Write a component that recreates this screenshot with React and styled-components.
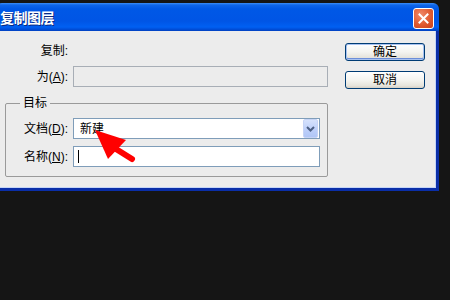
import React from "react";
import styled, { createGlobalStyle } from "styled-components";

const Global = createGlobalStyle`
  html, body { margin: 0; padding: 0; background: #151515; overflow: hidden; }
  body { width: 450px; height: 300px; font-family: "Liberation Sans", "Noto Sans CJK SC", sans-serif; }
`;

const Window = styled.div`
  position: relative;
  width: 443px;
  margin: 3px 0 0 -4px;
  display: flex;
  flex-direction: column;
`;

const TitleBar = styled.div`
  height: 28px;
  display: flex;
  align-items: center;
  justify-content: space-between;
  padding: 0 5px 0 4px;
  box-sizing: border-box;
  border-radius: 6px 6px 0 0;
  background: linear-gradient(180deg, #3d8ff7 0px, #0f66ea 2px, #0058e6 6px, #0055e5 18px, #0060f2 24px, #0050dc 26px, #0040c0 28px);
`;

const Title = styled.span`
  color: #fff;
  font-family: "Noto Sans CJK SC", sans-serif;
  font-weight: 700;
  font-size: 14px;
  line-height: 16px;
  letter-spacing: -0.5px;
  text-shadow: 1px 1px 0 #0a2a80;
`;

const CloseBtn = styled.div`
  width: 21px;
  height: 21px;
  margin-top: 2px;
  box-sizing: border-box;
  border: 1px solid #fff;
  border-radius: 3px;
  background: radial-gradient(circle at 35% 30%, #f08a6a 0%, #e05a30 55%, #c8401a 100%);
  display: flex;
  align-items: center;
  justify-content: center;
`;

const Frame = styled.div`
  border: 3px solid #0a2ea8;
  border-top: 0;
  background: #0a2ea8;
`;

const Body = styled.div`
  border: 1px solid #c4d4f6;
  border-top: 0;
  background: #ececec;
  display: flex;
  gap: 17px;
  padding: 9px 0 10px 0;
  font-size: 12px;
  color: #000;
`;

const LeftCol = styled.div`
  width: 328px;
  display: flex;
  flex-direction: column;
`;

const RightCol = styled.div`
  display: flex;
  flex-direction: column;
  gap: 10px;
  padding-top: 3px;
`;

const Row = styled.div`
  display: flex;
  align-items: center;
  height: 21px;
  margin-top: ${(p) => p.$mt || 0}px;
`;

const Label = styled.span`
  width: ${(p) => p.$w}px;
  text-align: right;
  margin-right: 5px;
  flex: none;
  line-height: 14px;
  white-space: nowrap;
`;

const U = styled.span`
  text-decoration: underline;
`;

const TextBox = styled.div`
  flex: 1;
  height: 21px;
  box-sizing: border-box;
  border: 1px solid ${(p) => (p.$disabled ? "#a8aeb6" : "#7f9db9")};
  background: ${(p) => (p.$disabled ? "#ececec" : "#fff")};
  display: flex;
  align-items: center;
  padding-left: 4px;
`;

const Caret = styled.span`
  width: 1px;
  height: 13px;
  background: #000;
`;

const Group = styled.fieldset`
  margin: 9px 0 0 5px;
  padding: 8px 7px 9px 0;
  border: 1px solid #9a9a9a;
  border-radius: 2px;
  min-width: 0;
`;

const Legend = styled.legend`
  margin-left: 14px;
  padding: 0 3px;
  line-height: 14px;
  font-size: 12px;
`;

const Select = styled.div`
  flex: 1;
  height: 21px;
  box-sizing: border-box;
  border: 1px solid #7f9db9;
  background: #fff;
  display: flex;
  align-items: center;
  justify-content: space-between;
  padding: 0 1px 0 6px;
`;

const SelectText = styled.span`
  line-height: 14px;
`;

const DropBtn = styled.div`
  width: 15px;
  height: 19px;
  box-sizing: border-box;
  border: 1px solid #c6d4f6;
  border-radius: 2px;
  background: linear-gradient(180deg, #d6e2fc 0%, #bccffa 60%, #b0c6f6 100%);
  display: flex;
  align-items: center;
  justify-content: center;
`;

const Button = styled.button`
  width: 80px;
  height: 18px;
  box-sizing: border-box;
  padding: 0;
  border: 1px solid #003c74;
  border-radius: 3px;
  background: linear-gradient(180deg, #ffffff 0%, #f4f4f0 50%, #e6e4dc 85%, #d6d0c5 100%);
  box-shadow: ${(p) => (p.$default ? "inset 0 0 0 1px #a8c2f0, inset 0 -1px 0 1px #6d8fd8" : "none")};
  font-family: "Liberation Sans", "Noto Sans CJK SC", sans-serif;
  font-size: 12px;
  line-height: 14px;
  color: #000;
`;

const Arrow = styled.svg`
  position: absolute;
  left: 94px;
  top: 119px;
`;

export default function App() {
  return (
    <>
      <Global />
      <Window>
        <TitleBar>
          <Title>复制图层</Title>
          <CloseBtn>
            <svg width="11" height="11" viewBox="0 0 11 11">
              <path d="M1.5 1.5 L9.5 9.5 M9.5 1.5 L1.5 9.5" stroke="#fff" strokeWidth="2" strokeLinecap="square" />
            </svg>
          </CloseBtn>
        </TitleBar>
        <Frame>
          <Body>
            <LeftCol>
              <Row>
                <Label $w={68}>复制:</Label>
              </Row>
              <Row $mt={5}>
                <Label $w={68}>
                  为(<U>A</U>):
                </Label>
                <TextBox $disabled />
              </Row>
              <Group>
                <Legend>目标</Legend>
                <Row>
                  <Label $w={62}>
                    文档(<U>D</U>):
                  </Label>
                  <Select>
                    <SelectText>新建</SelectText>
                    <DropBtn>
                      <svg width="9" height="6" viewBox="0 0 9 6">
                        <path d="M1 1 L4.5 4.5 L8 1" stroke="#4d6185" strokeWidth="2" fill="none" />
                      </svg>
                    </DropBtn>
                  </Select>
                </Row>
                <Row $mt={7}>
                  <Label $w={62}>
                    名称(<U>N</U>):
                  </Label>
                  <TextBox>
                    <Caret />
                  </TextBox>
                </Row>
              </Group>
            </LeftCol>
            <RightCol>
              <Button $default>确定</Button>
              <Button>取消</Button>
            </RightCol>
          </Body>
        </Frame>
        <Arrow width="50" height="45" viewBox="0 0 50 45">
          <polygon points="5,8 36,18 18,37" fill="#ff0000" />
          <line x1="26" y1="27" x2="42" y2="37" stroke="#ff0000" strokeWidth="6" strokeLinecap="round" />
        </Arrow>
      </Window>
    </>
  );
}
